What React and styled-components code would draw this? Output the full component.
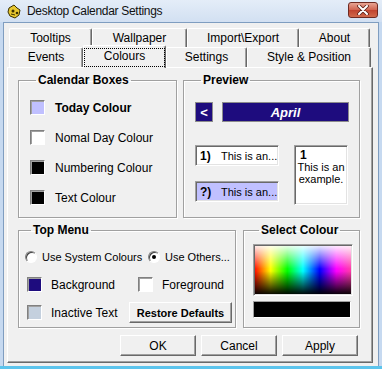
import styled, { createGlobalStyle } from "styled-components";

const GlobalStyle = createGlobalStyle`
  * { box-sizing: border-box; }
  body {
    margin: 0;
    background: #fff;
    font-family: "Liberation Sans", Arial, sans-serif;
    color: #000;
  }
`;

const Window = styled.div`
  width: 382px;
  height: 369px;
  display: flex;
  flex-direction: column;
  background: #c6d9f0;
  border-bottom: 3px solid #5cc4ec;
`;

const TitleBar = styled.div`
  height: 22px;
  display: flex;
  align-items: center;
  padding: 0 4px 0 7px;
  background: linear-gradient(#e4edf8, #d2e0f2);
`;

const TitleText = styled.span`
  flex: 1;
  margin-left: 5px;
  font-size: 12px;
  letter-spacing: -0.3px;
  color: #111;
`;

const CloseButton = styled.div`
  width: 30px;
  height: 16px;
  display: flex;
  align-items: center;
  justify-content: center;
  border: 1px solid #6e2a22;
  border-radius: 3px;
  background: linear-gradient(#e7a493, #d0624f 50%, #c0432f 51%, #d06a4c);
  margin-top: -2px;
`;

const Client = styled.div`
  flex: 1;
  margin: 0 3px 0 3px;
  border: 1px solid #7f9dc0;
  border-bottom: none;
  background: #f0f0f0;
  padding: 5px 0 0 3px;
`;

const TabStrip = styled.div`
  margin-left: 2px;
  display: flex;
  flex-direction: column;
`;

const TabRow = styled.div`
  display: flex;
  height: ${(p) => p.$h}px;
`;

const Tab = styled.div`
  width: ${(p) => p.$w}px;
  display: flex;
  justify-content: center;
  padding-top: ${(p) => (p.$active ? 3 : 2)}px;
  font-size: 12px;
  background: #f0f0f0;
  border: 1px solid;
  border-bottom: none;
  border-color: #fff #696969 #fff #fff;
  border-radius: 2px 2px 0 0;
  box-shadow: inset -1px 0 #a0a0a0;
  ${(p) =>
    p.$active &&
    `
    position: relative;
    z-index: 1;
    margin: -2px 0 -1px;
  `}
`;

const FocusLabel = styled.span`
  display: flex;
  justify-content: center;
  width: 100%;
  height: 19px;
  margin-top: -1px;
  padding-top: 1px;
  outline: 1px dotted #000;
  outline-offset: -1px;
`;

const Panel = styled.div`
  width: 366px;
  height: 296px;
  border: 1px solid;
  border-color: #fff #696969 #696969 #fff;
  box-shadow: inset -1px -1px #a0a0a0;
  padding: 5px 12px 0 10px;
`;

const GroupRow = styled.div`
  display: flex;
  gap: ${(p) => p.$gap}px;
  margin-top: ${(p) => p.$mt || 0}px;
`;

const Group = styled.fieldset`
  margin: 0;
  width: ${(p) => p.$w}px;
  height: ${(p) => p.$h}px;
  border: 1px solid #a0a0a0;
  box-shadow: 1px 1px 0 #fff, inset 1px 1px 0 #fff;
  padding: ${(p) => p.$pad};
  display: flex;
  flex-direction: column;
`;

const Legend = styled.legend`
  margin-left: 6px;
  padding: 0 2px;
  font-size: 12px;
  line-height: 14px;
  font-weight: bold;
  color: #000;
`;

const SwatchList = styled.div`
  display: flex;
  flex-direction: column;
  gap: 15px;
`;

const SwatchRow = styled.div`
  display: flex;
  align-items: center;
  gap: ${(p) => p.$gap || 10}px;
  height: 15px;
  margin-left: ${(p) => p.$indent || 0}px;
  font-size: 12px;
  font-weight: ${(p) => (p.$bold ? "bold" : "normal")};
`;

const Swatch = styled.span`
  width: 15px;
  height: 15px;
  flex: none;
  background: ${(p) => p.$color};
  border: 1px solid;
  border-color: #808080 #fff #fff #808080;
  box-shadow: inset 1px 1px #a0a0a0;
`;

const NavRow = styled.div`
  display: flex;
  gap: 9px;
`;

const NavBox = styled.div`
  width: ${(p) => p.$w}px;
  height: 20px;
  background: #1e0c7e;
  border: 1px solid #8c8c8c;
  color: #fff;
  font-weight: bold;
  font-style: ${(p) => (p.$italic ? "italic" : "normal")};
  font-size: 13px;
  display: flex;
  align-items: center;
  justify-content: center;
`;

const PreviewBody = styled.div`
  display: flex;
  gap: 15px;
  margin-top: 23px;
`;

const PreviewCol = styled.div`
  display: flex;
  flex-direction: column;
  gap: 15px;
`;

const Sunken = styled.div`
  border: 1px solid;
  border-color: #a0a0a0 #fff #fff #a0a0a0;
  box-shadow: inset 1px 1px #696969, inset -1px -1px #e3e3e3;
`;

const EventBox = styled(Sunken)`
  width: 84px;
  height: 21px;
  background: ${(p) => p.$bg};
  display: flex;
  align-items: center;
  gap: 6px;
  padding-left: 4px;
  font-size: 11px;
`;

const EventNum = styled.b`
  font-size: 12px;
  width: 15px;
`;

const DayBox = styled(Sunken)`
  width: 54px;
  height: 60px;
  background: #fff;
  font-size: 11px;
  line-height: 12px;
  padding: 3px 2px 0;
  text-align: center;
`;

const DayNum = styled.div`
  font-weight: bold;
  font-size: 12px;
  text-align: left;
  padding-left: 3px;
`;

const RadioRow = styled.div`
  display: flex;
  height: 14px;
  align-items: center;
  font-size: 11px;
`;

const RadioItem = styled.label`
  display: flex;
  align-items: center;
  gap: 5px;
  width: ${(p) => p.$w}px;
`;

const Radio = styled.span`
  width: 12px;
  height: 12px;
  border-radius: 50%;
  background: #fff;
  border: 1px solid;
  border-color: #808080 #fff #fff #808080;
  box-shadow: inset 1px 1px #404040;
  display: flex;
  align-items: center;
  justify-content: center;
`;

const Dot = styled.span`
  width: 4px;
  height: 4px;
  border-radius: 50%;
  background: #000;
`;

const OptionGrid = styled.div`
  display: grid;
  grid-template-columns: 102px 1fr;
  align-items: center;
  row-gap: 10px;
  margin-top: 13px;
  padding-left: 2px;
`;

const Button = styled.button`
  width: ${(p) => p.$w}px;
  height: 21px;
  padding: 0;
  font-family: "Liberation Sans", Arial, sans-serif;
  font-size: ${(p) => (p.$bold ? 11 : 12)}px;
  font-weight: ${(p) => (p.$bold ? "bold" : "normal")};
  color: #000;
  background: #f0f0f0;
  border: 1px solid;
  border-color: #fff #696969 #696969 #fff;
  box-shadow: inset -1px -1px #a0a0a0;
`;

const Spectrum = styled(Sunken)`
  width: 100px;
  height: 52px;
  background: linear-gradient(
      to bottom,
      rgba(255, 255, 255, 0.95),
      rgba(255, 255, 255, 0) 48%,
      rgba(0, 0, 0, 0) 52%,
      #000 100%
    ),
    linear-gradient(
      to right,
      #ff0000,
      #ffff00 17%,
      #00ff00 34%,
      #00ffff 50%,
      #0000ff 67%,
      #ff00ff 84%,
      #ff40a0
    );
`;

const ColourBar = styled.div`
  width: 98px;
  height: 17px;
  margin-top: 5px;
  background: #000;
  border: 1px solid;
  border-color: #a0a0a0 #fff #fff #a0a0a0;
`;

const ButtonRow = styled.div`
  display: flex;
  justify-content: flex-end;
  gap: 5px;
  margin: 7px 2px 0 0;
`;

const AppIcon = () => (
  <svg width="15" height="15" viewBox="0 0 15 15">
    <path d="M2 4 L7 1 L10 4 L13 6 L12 11 L8 14 L3 12 L1 8 Z" fill="#e8c830" stroke="#3a3000" strokeWidth="1" />
    <circle cx="6" cy="7" r="1.5" fill="#3a3000" />
    <circle cx="10" cy="9" r="1.3" fill="#3a3000" />
    <path d="M4 10 L8 11" stroke="#3a3000" strokeWidth="1" />
  </svg>
);

const CloseX = () => (
  <svg width="12" height="10" viewBox="0 0 12 10">
    <path d="M2 1 L10 9 M10 1 L2 9" stroke="#5a2018" strokeWidth="3.6" strokeLinecap="round" />
    <path d="M2 1 L10 9 M10 1 L2 9" stroke="#fff" strokeWidth="2" strokeLinecap="round" />
  </svg>
);

const App = () => {
  return (
    <>
      <GlobalStyle />
      <Window>
        <TitleBar>
          <AppIcon />
          <TitleText>Desktop Calendar Settings</TitleText>
          <CloseButton>
            <CloseX />
          </CloseButton>
        </TitleBar>
        <Client>
          <TabStrip>
            <TabRow $h={19}>
              <Tab $w={83}>Tooltips</Tab>
              <Tab $w={95}>Wallpaper</Tab>
              <Tab $w={112}>Import\Export</Tab>
              <Tab $w={71}>About</Tab>
            </TabRow>
            <TabRow $h={20}>
              <Tab $w={74}>Events</Tab>
              <Tab $w={83} $active>
                <FocusLabel>Colours</FocusLabel>
              </Tab>
              <Tab $w={81}>Settings</Tab>
              <Tab $w={124}>Style &amp; Position</Tab>
            </TabRow>
          </TabStrip>
          <Panel>
            <GroupRow $gap={6}>
              <Group $w={159} $h={145} $pad="13px 0 0 11px">
                <Legend>Calendar Boxes</Legend>
                <SwatchList>
                  <SwatchRow $bold>
                    <Swatch $color="#c0c0ff" />
                    Today Colour
                  </SwatchRow>
                  <SwatchRow>
                    <Swatch $color="#fff" />
                    Nomal Day Colour
                  </SwatchRow>
                  <SwatchRow>
                    <Swatch $color="#000" />
                    Numbering Colour
                  </SwatchRow>
                  <SwatchRow>
                    <Swatch $color="#000" />
                    Text Colour
                  </SwatchRow>
                </SwatchList>
              </Group>
              <Group $w={177} $h={145} $pad="15px 0 0 11px">
                <Legend>Preview</Legend>
                <NavRow>
                  <NavBox $w={18}>&lt;</NavBox>
                  <NavBox $w={127} $italic>
                    April
                  </NavBox>
                </NavRow>
                <PreviewBody>
                  <PreviewCol>
                    <EventBox $bg="#fff">
                      <EventNum>1)</EventNum>
                      This is an...
                    </EventBox>
                    <EventBox $bg="#c0c0ff">
                      <EventNum>?)</EventNum>
                      This is an...
                    </EventBox>
                  </PreviewCol>
                  <DayBox>
                    <DayNum>1</DayNum>
                    This is an example.
                  </DayBox>
                </PreviewBody>
              </Group>
            </GroupRow>
            <GroupRow $gap={7} $mt={5}>
              <Group $w={218} $h={105} $pad="13px 0 0 6px">
                <Legend>Top Menu</Legend>
                <RadioRow>
                  <RadioItem $w={123}>
                    <Radio />
                    Use System Colours
                  </RadioItem>
                  <RadioItem>
                    <Radio>
                      <Dot />
                    </Radio>
                    Use Others...
                  </RadioItem>
                </RadioRow>
                <OptionGrid>
                  <SwatchRow $gap={9}>
                    <Swatch $color="#1e0c7e" />
                    Background
                  </SwatchRow>
                  <SwatchRow $gap={9} $indent={9}>
                    <Swatch $color="#fff" />
                    Foreground
                  </SwatchRow>
                  <SwatchRow $gap={9}>
                    <Swatch $color="#c4d0de" />
                    Inactive Text
                  </SwatchRow>
                  <Button $w={103} $bold>
                    Restore Defaults
                  </Button>
                </OptionGrid>
              </Group>
              <Group $w={117} $h={105} $pad="7px 0 0 9px">
                <Legend>Select Colour</Legend>
                <Spectrum />
                <ColourBar />
              </Group>
            </GroupRow>
            <ButtonRow>
              <Button $w={76}>OK</Button>
              <Button $w={76}>Cancel</Button>
              <Button $w={76}>Apply</Button>
            </ButtonRow>
          </Panel>
        </Client>
      </Window>
    </>
  );
};

export default App;
